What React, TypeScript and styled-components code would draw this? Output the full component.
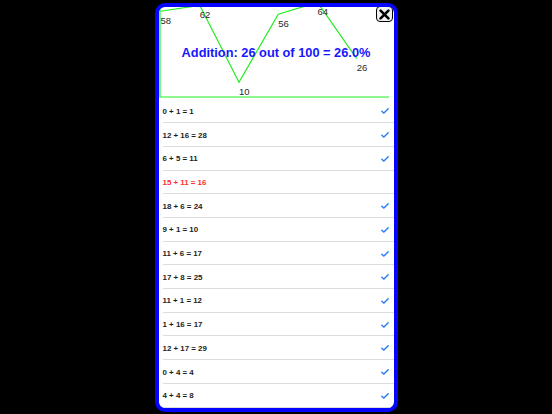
import React from 'react'
import styled, { createGlobalStyle } from 'styled-components'

const GlobalStyle = createGlobalStyle`
  html, body {
    margin: 0;
    padding: 0;
    background: #000;
  }
  body {
    font-family: 'Liberation Sans', Arial, sans-serif;
  }
`

const Page = styled.div`
  display: flex;
  justify-content: center;
  padding-top: 3px;
  min-height: 414px;
  box-sizing: border-box;
`

const Sheet = styled.div`
  width: 243px;
  height: 409px;
  box-sizing: border-box;
  border: 4px solid #0505ff;
  border-radius: 10px;
  background: #fff;
  overflow: hidden;
  position: relative;
  display: flex;
  flex-direction: column;
`

const ChartArea = styled.div`
  position: relative;
  height: 92.6px;
  flex-shrink: 0;
`

const ChartSvg = styled.svg`
  display: block;
  overflow: visible;
`

const Title = styled.div`
  position: absolute;
  top: 38px;
  left: 0;
  right: 0;
  text-align: center;
  font-size: 12.8px;
  line-height: 15px;
  font-weight: 700;
  color: #1717ff;
  white-space: nowrap;
`

const CloseButton = styled.button`
  position: absolute;
  top: -1px;
  right: 1px;
  width: 17px;
  height: 16px;
  padding: 0;
  box-sizing: border-box;
  border: 1.5px solid #000;
  border-radius: 4px;
  background: #f0f0f0;
  display: flex;
  align-items: center;
  justify-content: center;
`

const List = styled.div`
  display: flex;
  flex-direction: column;
`

const Row = styled.div<{ $wrong?: boolean }>`
  height: 23.7px;
  box-sizing: border-box;
  margin-left: 4px;
  padding: 1px 5px 0 0;
  border-bottom: 1px solid #dcdcdc;
  display: flex;
  align-items: center;
  justify-content: space-between;
  font-size: 7.9px;
  font-weight: 700;
  color: ${p => (p.$wrong ? '#ff2d2d' : '#1c1c1e')};
`

const scores = [58, 62, 10, 56, 64, 26]
const px = (i: number) => 1.5 + i * 39.25
const py = (v: number) => 90 - v * 1.478

const answers: { text: string; ok: boolean }[] = [
  { text: '0 + 1 = 1', ok: true },
  { text: '12 + 16 = 28', ok: true },
  { text: '6 + 5 = 11', ok: true },
  { text: '15 + 11 = 16', ok: false },
  { text: '18 + 6 = 24', ok: true },
  { text: '9 + 1 = 10', ok: true },
  { text: '11 + 6 = 17', ok: true },
  { text: '17 + 8 = 25', ok: true },
  { text: '11 + 1 = 12', ok: true },
  { text: '1 + 16 = 17', ok: true },
  { text: '12 + 17 = 29', ok: true },
  { text: '0 + 4 = 4', ok: true },
  { text: '4 + 4 = 8', ok: true },
]

const Check = () => (
  <svg width="8" height="6" viewBox="0 0 8 6">
    <path d="M0.8 3.3 L2.9 5.1 L7.2 0.8" fill="none" stroke="#2a7df7" strokeWidth="1.4" strokeLinecap="round" strokeLinejoin="round" />
  </svg>
)

const ScoreChart = () => {
  const line = scores.map((v, i) => `${px(i)},${py(v)}`).join(' ')
  return (
    <ChartSvg width="235" height="92.6">
      <polyline points="1,-10 1,90 230,90" fill="none" stroke="#22ee22" strokeWidth="1.2" />
      <polyline points={line} fill="none" stroke="#22ee22" strokeWidth="1.2" />
      {scores.map((v, i) => (
        <text key={i} x={px(i)} y={py(v) + 12.3} fontSize="9.5" fill="#2a2a2a" fontFamily="'Liberation Sans', Arial, sans-serif">
          {v}
        </text>
      ))}
    </ChartSvg>
  )
}

export default function App() {
  return (
    <>
      <GlobalStyle />
      <Page>
        <Sheet>
          <ChartArea>
            <ScoreChart />
            <Title>Addition: 26 out of 100 = 26.0%</Title>
            <CloseButton aria-label="Close">
              <svg width="11" height="11" viewBox="0 0 11 11">
                <path d="M1.6 1.6 L9.4 9.4 M9.4 1.6 L1.6 9.4" stroke="#000" strokeWidth="2.6" strokeLinecap="round" />
              </svg>
            </CloseButton>
          </ChartArea>
          <List>
            {answers.map(a => (
              <Row key={a.text} $wrong={!a.ok}>
                <span>{a.text}</span>
                {a.ok && <Check />}
              </Row>
            ))}
          </List>
        </Sheet>
      </Page>
    </>
  )
}
